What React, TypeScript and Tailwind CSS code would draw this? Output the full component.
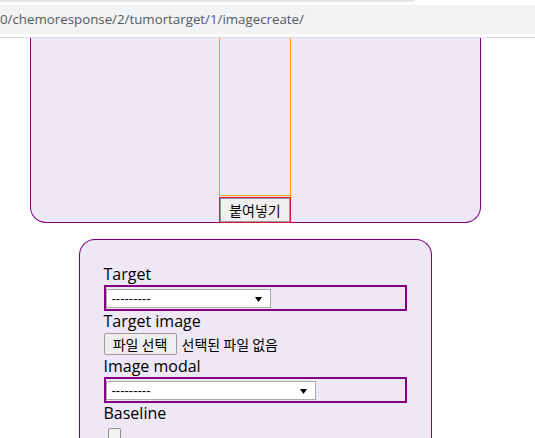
function Arrow() {
  return (
    <svg className="absolute right-[8px] top-[7px]" width="7" height="5" viewBox="0 0 7 5">
      <path d="M0 0 L7 0 L3.5 5 Z" fill="#000" />
    </svg>
  );
}

function FakeSelect({ width }: { width: string }) {
  return (
    <div className="h-[26px] w-full border-2 border-[#800080] pt-[2px]">
      <div
        className={`relative flex h-[19px] ${width} items-center border border-[#a9a9a9] bg-white pl-[5px] text-[13px] text-black`}
        style={{ fontFamily: '"Liberation Sans", Arial, sans-serif' }}
      >
        <span className="leading-[15px]">---------</span>
        <Arrow />
      </div>
    </div>
  );
}

function Label({ children }: { children: string }) {
  return <div className="h-[21px] text-[16px] leading-[21px] text-black">{children}</div>;
}

export default function App() {
  return (
    <div className="min-h-[438px] bg-white" style={{ fontFamily: '"Open Sans", "Noto Sans CJK KR", sans-serif' }}>
      {/* browser chrome */}
      <div className="h-[5px] bg-white">
        <div className="h-[2px] w-[415px] rounded-br-[3px] bg-[#e3e5e8]" />
      </div>
      <div className="flex h-[29px] items-center bg-[#f1f3f4] text-[13.3px] text-[#555a5f]">
        <span className="pt-[1px]">0/chemoresponse/2/tumortarget/1/imagecreate/</span>
      </div>
      <div className="h-[3px] bg-white" />
      <div className="h-px bg-[#dadce0]" />

      <div className="flex w-[510px] flex-col items-center">
        {/* paste panel */}
        <div className="flex w-[451px] flex-col items-center rounded-b-[16px] border-x border-b border-[#800080] bg-[#ede7f6]">
          <div className="h-[158px] w-[72px] border-x border-b border-[#ffa500]" />
          <div className="relative z-10 mt-px -mb-px h-[26px] w-[72px] border border-[#dc143c]">
            <button
              className="h-full w-full border border-[#9a9a9a] bg-[#efefef] text-[14px] leading-[20px] text-black"
              style={{ fontFamily: '"Noto Sans CJK KR", sans-serif' }}
            >
              붙여넣기
            </button>
          </div>
        </div>

        {/* form panel */}
        <div className="mt-[16px] h-[220px] w-[353px] rounded-t-[16px] border-x border-t border-[#800080] bg-[#ede7f6] px-6 pt-6">
          <Label>Target</Label>
          <FakeSelect width="w-[165px]" />
          <Label>Target image</Label>
          <div
            className="flex h-[24px] items-center gap-[5px] text-[14px] text-black"
            style={{ fontFamily: '"Noto Sans CJK KR", sans-serif' }}
          >
            <button className="h-[22px] w-[73px] rounded-[2px] border border-[#9a9a9a] bg-[#efefef] leading-[20px]">파일 선택</button>
            <span>선택된 파일 없음</span>
          </div>
          <Label>Image modal</Label>
          <FakeSelect width="w-[210px]" />
          <Label>Baseline</Label>
          <input
            type="checkbox"
            className="ml-[4px] mt-[4px] block h-[13px] w-[13px] appearance-none rounded-[2px] border border-[#8f8f8f] bg-[#f3f3f3]"
          />
        </div>
      </div>
    </div>
  );
}
